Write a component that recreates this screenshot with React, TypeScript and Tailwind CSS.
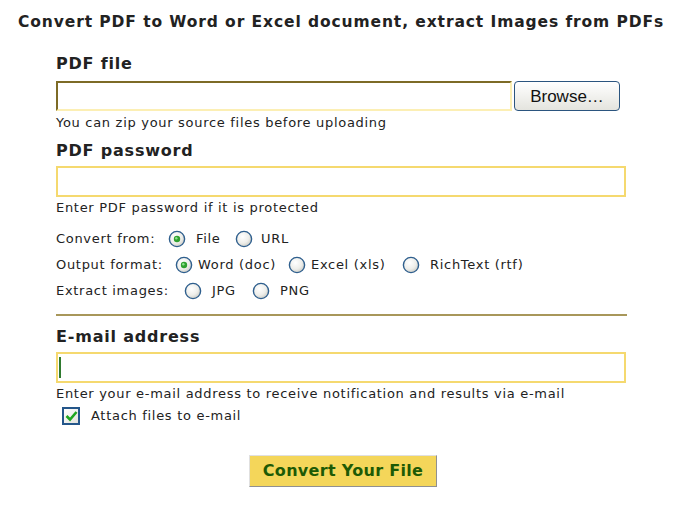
import React, { useState } from 'react';

const Radio: React.FC<{ checked?: boolean; onClick?: () => void }> = ({ checked, onClick }) => (
  <svg width="18" height="18" viewBox="0 0 18 18" onClick={onClick} className="shrink-0 cursor-pointer">
    <defs>
      <radialGradient id="rg" cx="0.4" cy="0.35" r="0.7">
        <stop offset="0" stopColor="#ffffff" />
        <stop offset="0.6" stopColor="#eeeeea" />
        <stop offset="1" stopColor="#c9c9c2" />
      </radialGradient>
    </defs>
    <circle cx="9" cy="9" r="7.6" fill="url(#rg)" stroke="#2f5f8e" strokeWidth="1.4" />
    {checked && (
      <>
        <circle cx="9" cy="9" r="3.2" fill="#2fa12f" />
        <circle cx="8.3" cy="8.2" r="1.2" fill="#8fe08f" />
      </>
    )}
  </svg>
);

const Hint: React.FC<{ children: React.ReactNode; className?: string }> = ({ children, className }) => (
  <div className={`text-[13px] leading-[16px] tracking-[0.7px] text-[#222] whitespace-nowrap ${className ?? ''}`}>{children}</div>
);

const Label: React.FC<{ children: React.ReactNode; className?: string }> = ({ children, className }) => (
  <div className={`text-[16px] font-bold leading-[20px] text-[#222] tracking-[0.8px] ${className ?? ''}`}>{children}</div>
);

export default function App() {
  const [from, setFrom] = useState<'file' | 'url'>('file');
  const [format, setFormat] = useState<'doc' | 'xls' | 'rtf'>('doc');
  const [img, setImg] = useState<'jpg' | 'png' | null>(null);
  const [attach, setAttach] = useState(true);

  return (
    <div className="w-[680px] h-[514px] bg-white text-[#222] overflow-hidden" style={{ fontFamily: '"DejaVu Sans", Verdana, sans-serif' }}>
      <div className="pl-[18px] pt-[12px] text-[15.5px] font-bold leading-[20px] tracking-[0.9px] text-[#222] whitespace-nowrap">
        Convert PDF to Word or Excel document, extract Images from PDFs
      </div>

      <div className="pl-[56px] w-[627px]">
        <Label className="mt-[22px]">PDF file</Label>
        <div className="flex mt-[7px] gap-[2px]">
          <div className="w-[456px] h-[30px] border-2 border-t-[#7d6b26] border-l-[#7d6b26] border-b-[#fcefb4] border-r-[#fcefb4] bg-white" />
          <button
            className="w-[106px] h-[30px] rounded-[4px] border border-[#2b557f] bg-gradient-to-b from-white to-[#e4e4de] text-[17px] leading-none text-[#111]"
            style={{ fontFamily: '"Liberation Sans", Arial, sans-serif' }}
          >
            Browse…
          </button>
        </div>
        <Hint className="mt-[4px]">You can zip your source files before uploading</Hint>

        <Label className="mt-[10px]">PDF password</Label>
        <input type="password" className="block mt-[5px] w-[570px] h-[31px] border-2 border-[#f5d96f] outline-none bg-white px-1" />
        <Hint className="mt-[3px]">Enter PDF password if it is protected</Hint>

        <div className="mt-[10px] text-[13px] tracking-[0.7px] whitespace-nowrap">
          <div className="flex items-center h-[26px]">
            <span className="w-[112px]">Convert from:</span>
            <Radio checked={from === 'file'} onClick={() => setFrom('file')} />
            <span className="ml-[10px] w-[39px]">File</span>
            <Radio checked={from === 'url'} onClick={() => setFrom('url')} />
            <span className="ml-[8px]">URL</span>
          </div>
          <div className="flex items-center h-[26px]">
            <span className="w-[119px]">Output format:</span>
            <Radio checked={format === 'doc'} onClick={() => setFormat('doc')} />
            <span className="ml-[5px] w-[90px]">Word (doc)</span>
            <Radio checked={format === 'xls'} onClick={() => setFormat('xls')} />
            <span className="ml-[5px] w-[91px]">Excel (xls)</span>
            <Radio checked={format === 'rtf'} onClick={() => setFormat('rtf')} />
            <span className="ml-[10px]">RichText (rtf)</span>
          </div>
          <div className="flex items-center h-[26px]">
            <span className="w-[128px]">Extract images:</span>
            <Radio checked={img === 'jpg'} onClick={() => setImg('jpg')} />
            <span className="ml-[10px] w-[40px]">JPG</span>
            <Radio checked={img === 'png'} onClick={() => setImg('png')} />
            <span className="ml-[10px]">PNG</span>
          </div>
        </div>

        <div className="mt-[10px] h-[2px] w-[571px] bg-[#a8975a]" />

        <Label className="mt-[11px]">E-mail address</Label>
        <div className="mt-[5px] w-[570px] h-[31px] border-2 border-[#f5d96f] bg-white flex items-center pl-[1px]">
          <div className="w-[2px] h-[21px] bg-[#2f7a2f]" />
        </div>
        <Hint className="mt-[3px]">Enter your e-mail address to receive notification and results via e-mail</Hint>

        <div className="flex items-center h-[20px] mt-[4px] pl-[6px] text-[13px] tracking-[0.7px]">
          <div
            onClick={() => setAttach(!attach)}
            className="w-[18px] h-[18px] border-2 border-[#24568a] bg-gradient-to-br from-white to-[#e2e2dc] flex items-center justify-center cursor-pointer"
          >
            {attach && (
              <svg width="13" height="12" viewBox="0 0 13 12">
                <path d="M1.5 6 L5 9.5 L11.5 2" fill="none" stroke="#1fa61f" strokeWidth="2.6" />
              </svg>
            )}
          </div>
          <span className="ml-[11px]">Attach files to e-mail</span>
        </div>

        <div className="flex mt-[29px] pl-[193px]">
          <button className="w-[188px] h-[32px] bg-[#f4d65a] border border-t-[#e0e0e0] border-l-[#e0e0e0] border-b-[#909090] border-r-[#909090] text-[16px] font-bold text-[#1d5a05] tracking-[0.3px]">
            Convert Your File
          </button>
        </div>
      </div>
    </div>
  );
}
